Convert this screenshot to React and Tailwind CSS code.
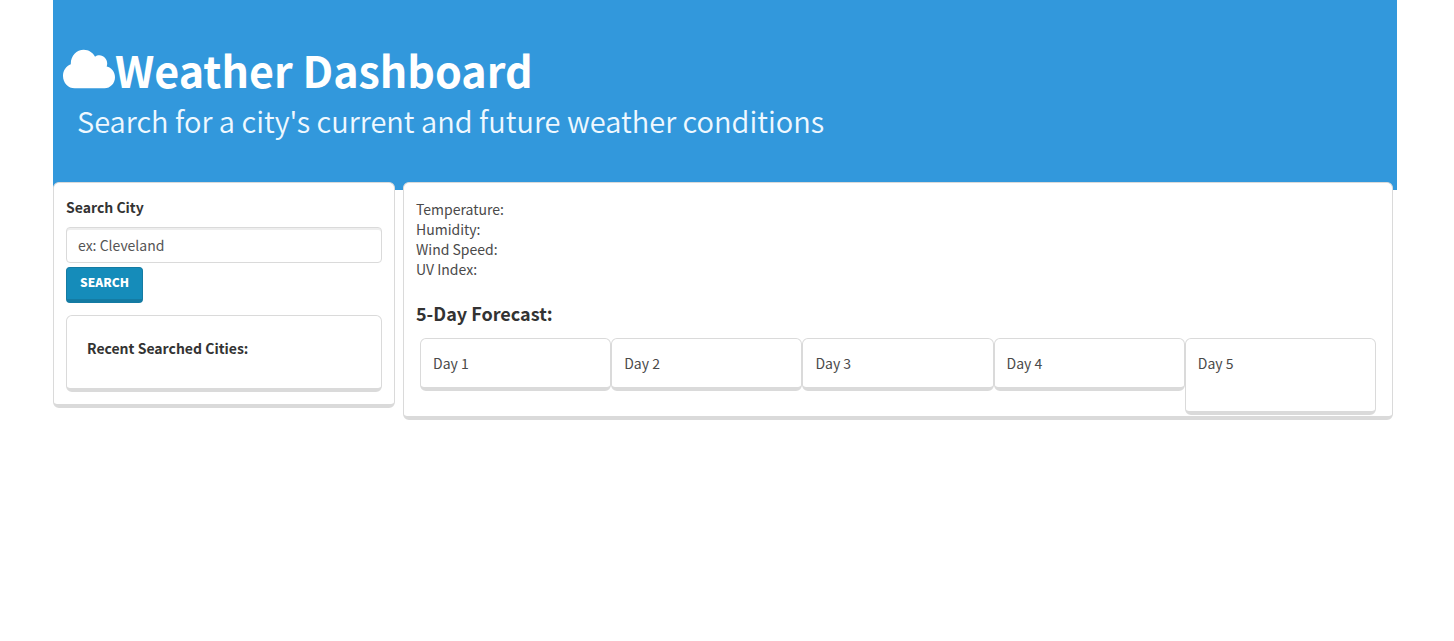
import React from "react";
import { FaCloud } from "react-icons/fa";

const days = ["Day 1", "Day 2", "Day 3", "Day 4", "Day 5"];
const readings = ["Temperature:", "Humidity:", "Wind Speed:", "UV Index:"];
const card = "rounded-md border border-b-4 border-[#dadada] bg-white";

export default function App() {
  return (
    <div className="bg-white pr-[57px] pl-[53px] font-['Noto_Sans_CJK_SC',sans-serif] text-[14px] leading-5 font-normal text-[#4a4a4a]">
      <header className="bg-[#3298dc] px-[10px] pt-[45px] pb-[50px]">
        <h1 className="flex items-center text-[43px] leading-[48px] font-bold text-white">
          <FaCloud className="h-11 w-[52px] shrink-0" preserveAspectRatio="none" aria-hidden="true" />
          Weather Dashboard
        </h1>
        <p className="pt-[7px] pl-[14px] text-[29px] leading-10 font-[350] text-[#eff8ff]">
          Search for a city's current and future weather conditions
        </p>
      </header>

      <main className="-mt-2 grid grid-cols-[342fr_990fr] items-start gap-2 pr-1">
        <section className={`${card} px-3 pt-3 pb-3`}>
          <form onSubmit={(e) => e.preventDefault()}>
            <label htmlFor="city" className="mb-2 block leading-6 font-bold text-[#333333]">
              Search City
            </label>
            <input
              id="city"
              type="text"
              placeholder="ex: Cleveland"
              className="block h-9 w-full rounded border border-[#dadada] bg-white px-[11px] shadow-[inset_0_2px_0_#eeeeee] placeholder:text-[#555555]"
            />
            <button
              type="submit"
              className="mt-1 block h-9 rounded border border-b-4 border-[#147ba3] bg-[#158cba] px-[13px] pb-1 text-[12px] leading-4 font-black text-white"
            >
              SEARCH
            </button>
          </form>
          <div className={`${card} mt-3 px-5 pt-[22px] pb-[29px]`}>
            <h2 className="leading-[21px] font-bold text-[#333333]">Recent Searched Cities:</h2>
          </div>
        </section>

        <section className={`${card} px-3 pt-4 pb-px`}>
          <ul>
            {readings.map((r) => (
              <li key={r}>{r}</li>
            ))}
          </ul>
          <h2 className="mt-5 mb-[11px] text-[18px] leading-7 font-bold text-[#333333]">5-Day Forecast:</h2>
          <div className="grid grid-cols-5 items-start px-1">
            {days.map((d) => (
              <div key={d} className={`${card} px-3 pt-[14px] pb-[14px] last:pb-[38px]`}>
                {d}
              </div>
            ))}
          </div>
        </section>
      </main>
    </div>
  );
}
